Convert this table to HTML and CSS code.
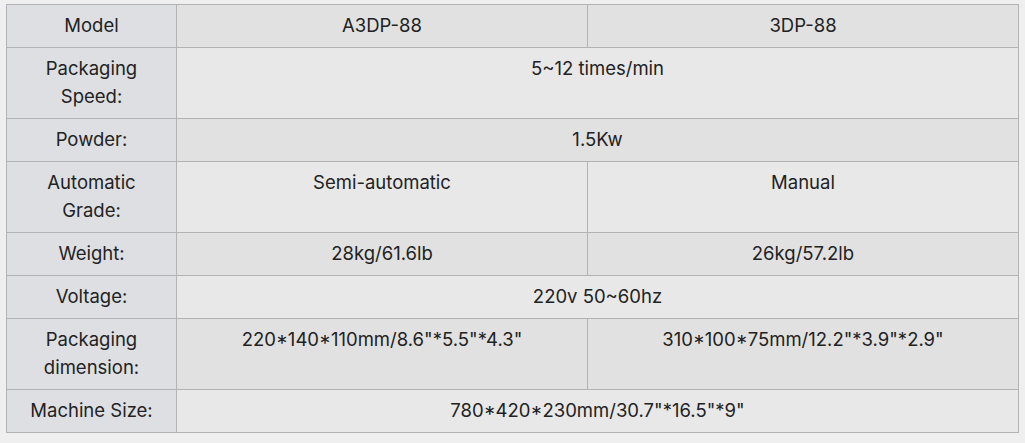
FILE: index.html
```html
<!DOCTYPE html>
<html>
<head>
<meta charset="utf-8">
<link rel="stylesheet" href="styles.css">
</head>
<body>
<table class="spec">
  <colgroup>
    <col class="c-label">
    <col class="c-a">
    <col class="c-b">
  </colgroup>
  <tbody>
    <tr class="odd">
      <td class="label">Model</td>
      <td>A3DP-88</td>
      <td>3DP-88</td>
    </tr>
    <tr class="even">
      <td class="label">Packaging Speed:</td>
      <td colspan="2">5~12 times/min</td>
    </tr>
    <tr class="odd">
      <td class="label">Powder:</td>
      <td colspan="2">1.5Kw</td>
    </tr>
    <tr class="even">
      <td class="label">Automatic Grade:</td>
      <td>Semi-automatic</td>
      <td>Manual</td>
    </tr>
    <tr class="odd">
      <td class="label">Weight:</td>
      <td>28kg/61.6lb</td>
      <td>26kg/57.2lb</td>
    </tr>
    <tr class="even">
      <td class="label">Voltage:</td>
      <td colspan="2">220v 50~60hz</td>
    </tr>
    <tr class="odd">
      <td class="label">Packaging dimension:</td>
      <td>220*140*110mm/8.6"*5.5"*4.3"</td>
      <td>310*100*75mm/12.2"*3.9"*2.9"</td>
    </tr>
    <tr class="even">
      <td class="label">Machine Size:</td>
      <td colspan="2">780*420*230mm/30.7"*16.5"*9"</td>
    </tr>
  </tbody>
</table>
</body>
</html>
```

FILE: styles.css
```css
html, body {
  margin: 0;
  background: #efefef;
}
body {
  padding: 4px 6px;
  font-family: Inter, "Noto Sans", sans-serif;
  font-size: 18.5px;
  color: #222;
}
.spec {
  border-collapse: collapse;
  table-layout: fixed;
  width: 1012px;
}
.c-label { width: 170px; }
.c-a { width: 411px; }
.c-b { width: 431px; }
.spec td {
  border: 1px solid #b3b3b3;
  padding: 6px 15px 8px;
  line-height: 28px;
  text-align: center;
  vertical-align: top;
}
.odd td { background: #e1e1e1; }
.even td { background: #e8e8e8; }
.spec td.label { background: #dedfe3; }
```
